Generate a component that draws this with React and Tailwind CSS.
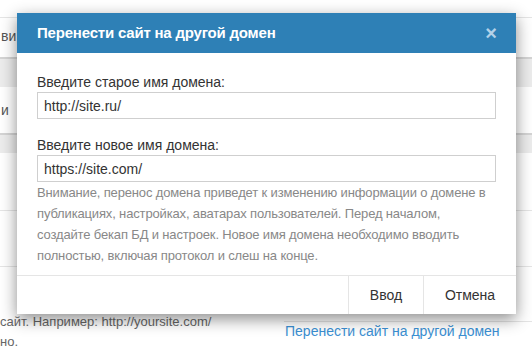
const font = { fontFamily: '"Liberation Sans", Arial, sans-serif' }

const Field = ({ label, value }) => (
  <div>
    <label className="block text-[14px] leading-[17px] text-[#333] mb-[1px]">{label}</label>
    <input
      readOnly
      value={value}
      className="block w-full h-[27px] px-[6px] border border-[#cfcfcf] bg-white text-[14px] text-[#333] outline-none"
    />
  </div>
)

const MoveDomainModal = () => (
  <div className="absolute left-[17px] top-[13px] w-[499px] bg-white shadow-[0_5px_15px_rgba(0,0,0,0.45)]">
    {/* Header */}
    <div className="flex items-center justify-between h-[40px] bg-[#2e80b6] pl-[20px] pr-[19px]">
      <h4 className="text-[15px] font-bold text-white tracking-[-0.2px]">Перенести сайт на другой домен</h4>
      <button className="text-[20px] leading-none font-bold text-[#b3d1e8]">×</button>
    </div>

    {/* Body */}
    <div className="px-[20px] pt-[21px] pb-[9px]">
      <Field label="Введите старое имя домена:" value="http://site.ru/" />
      <div className="mt-[18px]">
        <Field label="Введите новое имя домена:" value="https://site.com/" />
      </div>
      <p className="text-[13px] leading-[21px] text-[#888] tracking-[-0.15px]">
        Внимание, перенос домена приведет к изменению информации о домене в публикациях, настройках,
        аватарах пользователей. Перед началом, создайте бекап БД и настроек. Новое имя домена
        необходимо вводить полностью, включая протокол и слеш на конце.
      </p>
    </div>

    {/* Footer */}
    <div className="flex justify-end h-[39px] border-t border-[#e5e5e5]">
      <button className="w-[75px] border-l border-[#e5e5e5] text-[14px] text-[#333]">Ввод</button>
      <button className="w-[93px] border-l border-[#e5e5e5] text-[14px] text-[#333]">Отмена</button>
    </div>
  </div>
)

export default function App() {
  return (
    <div className="relative w-[532px] h-[357px] overflow-hidden bg-white" style={font}>
      {/* Page behind the dialog */}
      <div className="pt-[17px] text-[14px] text-[#555]">
        <div className="h-[40px] border-t border-[#e5e5e5] flex items-center pl-[1px] pb-[3px]">ви</div>
        <div className="h-[30px] border-t-2 border-[#d4d4d4] bg-[#ececec]"></div>
        <div className="h-[46px] flex items-center pl-[1px]">и</div>
        <div className="h-[20px] border-t-2 border-[#d4d4d4] bg-[#ececec]"></div>
        <div className="h-[58px] border-b border-[#e5e5e5]"></div>
        <div className="h-[56px] border-b border-[#e5e5e5]"></div>
        <div className="flex">
          <div className="w-[284px] pt-[45px] text-[13px] leading-[20px] text-[#666]">
            <div>сайт. Например: http://yoursite.com/</div>
            <div>но.</div>
          </div>
          <div className="flex-1">
            <div className="h-[55px] border-b border-[#e5e5e5]"></div>
            <a className="block -mt-[1px] pl-[1px] text-[14px] text-[#3b8fd2]">Перенести сайт на другой домен</a>
          </div>
        </div>
      </div>

      <MoveDomainModal />
    </div>
  )
}
